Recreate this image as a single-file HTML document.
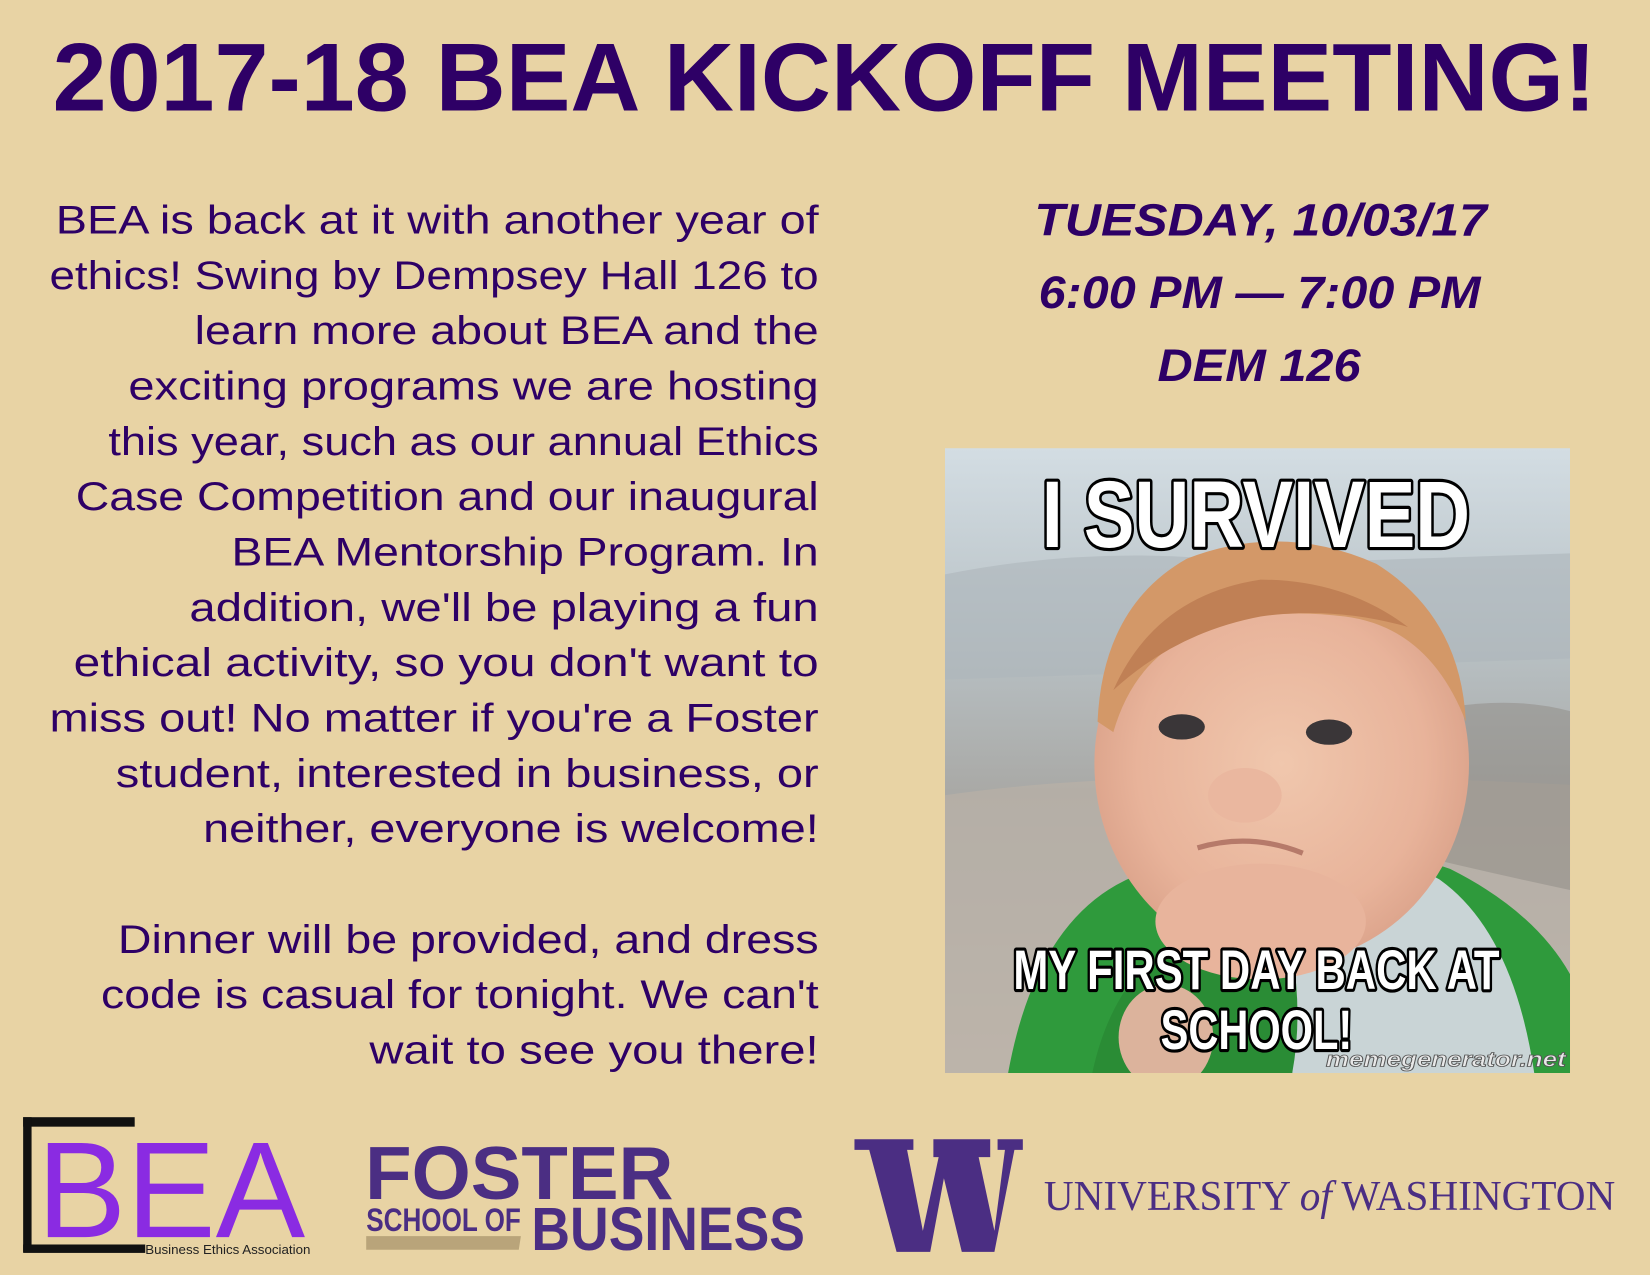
<!DOCTYPE html>
<html><head><meta charset="utf-8"><style>
html,body{margin:0;padding:0;background:#e8d3a4;}
svg{display:block}
</style></head><body>
<svg width="1650" height="1275" viewBox="0 0 1568 1212" preserveAspectRatio="none" xmlns="http://www.w3.org/2000/svg">
<defs>
<linearGradient id="bg" x1="0" y1="0" x2="0" y2="1">
<stop offset="0" stop-color="#d3dde3"/><stop offset="0.3" stop-color="#b9c2c6"/><stop offset="0.55" stop-color="#a9a9a6"/><stop offset="1" stop-color="#c4bcb2"/>
</linearGradient>
<radialGradient id="face" cx="0.5" cy="0.5" r="0.55">
<stop offset="0" stop-color="#f0c7ad"/><stop offset="0.7" stop-color="#e8b39a"/><stop offset="1" stop-color="#d9a088"/>
</radialGradient>
</defs>
<rect width="1568" height="1212" fill="#e8d3a4"/>
<text x="50" y="105" font-family="Liberation Sans, sans-serif" font-weight="bold" font-size="92" fill="#2e0066" textLength="1467" lengthAdjust="spacingAndGlyphs">2017-18 BEA KICKOFF MEETING!</text>

<g font-family="Liberation Sans, sans-serif" font-size="38" fill="#2e0066" text-anchor="end">
<text x="778" y="222" textLength="725" lengthAdjust="spacingAndGlyphs">BEA is back at it with another year of</text>
<text x="778" y="274.6" textLength="731" lengthAdjust="spacingAndGlyphs">ethics! Swing by Dempsey Hall 126 to</text>
<text x="778" y="327.2" textLength="593" lengthAdjust="spacingAndGlyphs">learn more about BEA and the</text>
<text x="778" y="379.8" textLength="656" lengthAdjust="spacingAndGlyphs">exciting programs we are hosting</text>
<text x="778" y="432.4" textLength="675" lengthAdjust="spacingAndGlyphs">this year, such as our annual Ethics</text>
<text x="778" y="485" textLength="706" lengthAdjust="spacingAndGlyphs">Case Competition and our inaugural</text>
<text x="778" y="537.6" textLength="558" lengthAdjust="spacingAndGlyphs">BEA Mentorship Program. In</text>
<text x="778" y="590.2" textLength="598" lengthAdjust="spacingAndGlyphs">addition, we'll be playing a fun</text>
<text x="778" y="642.8" textLength="708" lengthAdjust="spacingAndGlyphs">ethical activity, so you don't want to</text>
<text x="778" y="695.4" textLength="731" lengthAdjust="spacingAndGlyphs">miss out! No matter if you're a Foster</text>
<text x="778" y="748" textLength="668" lengthAdjust="spacingAndGlyphs">student, interested in business, or</text>
<text x="778" y="800.6" textLength="585" lengthAdjust="spacingAndGlyphs">neither, everyone is welcome!</text>
<text x="778" y="905.8" textLength="666" lengthAdjust="spacingAndGlyphs">Dinner will be provided, and dress</text>
<text x="778" y="958.4" textLength="682" lengthAdjust="spacingAndGlyphs">code is casual for tonight. We can't</text>
<text x="778" y="1011" textLength="427" lengthAdjust="spacingAndGlyphs">wait to see you there!</text>
</g>

<g font-family="Liberation Sans, sans-serif" font-weight="bold" font-style="italic" font-size="43" fill="#2e0066">
<text x="983" y="224" textLength="430" lengthAdjust="spacingAndGlyphs">TUESDAY, 10/03/17</text>
<text x="987" y="293" textLength="420" lengthAdjust="spacingAndGlyphs">6:00 PM — 7:00 PM</text>
<text x="1100" y="362" textLength="193" lengthAdjust="spacingAndGlyphs">DEM 126</text>
</g>

<svg x="898" y="426" width="594" height="594" viewBox="0 0 594 594">
<rect width="594" height="594" fill="url(#bg)"/>
<path d="M0 120 Q150 90 300 110 L594 100 L594 200 L0 220Z" fill="#aeb6ba" opacity="0.6"/>
<path d="M0 330 Q200 300 594 320 L594 594 L0 594Z" fill="#b9b1a7" opacity="0.7"/>
<path d="M420 260 Q520 230 594 250 L594 420 Q500 400 420 380Z" fill="#8e8a84" opacity="0.5"/>
<path d="M60 594 Q90 430 200 400 Q300 390 360 360 Q420 380 480 400 Q560 440 594 500 L594 594Z" fill="#2f9a3c"/>
<path d="M340 390 Q420 380 470 410 Q540 460 560 594 L330 594 Q320 470 340 390Z" fill="#c9d4d6"/>
<path d="M140 594 Q160 500 230 460 Q300 440 330 480 Q340 540 330 594Z" fill="#2a8c35"/>
<ellipse cx="320" cy="300" rx="178" ry="190" fill="url(#face)"/>
<ellipse cx="300" cy="450" rx="100" ry="55" fill="#e8b49c"/>
<path d="M145 260 Q150 150 230 105 Q320 70 410 110 Q490 160 495 260 Q460 170 380 160 Q300 150 240 175 Q180 200 160 270Z" fill="#d39868"/>
<path d="M160 230 Q200 140 300 125 Q380 125 440 170 Q370 150 300 160 Q220 175 160 230Z" fill="#c08055"/>
<ellipse cx="225" cy="265" rx="22" ry="12" fill="#3a3638"/>
<ellipse cx="365" cy="270" rx="22" ry="12" fill="#3a3638"/>
<ellipse cx="285" cy="330" rx="35" ry="26" fill="#eab79f"/>
<path d="M240 380 Q290 365 340 385" stroke="#b67a6a" stroke-width="5" fill="none"/>
<ellipse cx="210" cy="560" rx="45" ry="50" fill="#dcb39c"/>
</svg>

<g font-family="Liberation Sans, sans-serif" font-weight="bold" fill="#fff" stroke="#000" stroke-width="6" paint-order="stroke" stroke-linejoin="round">
<text x="990" y="520" font-size="90" textLength="407" lengthAdjust="spacingAndGlyphs">I SURVIVED</text>
<text x="963" y="940" font-size="53" textLength="462" lengthAdjust="spacingAndGlyphs">MY FIRST DAY BACK AT</text>
<text x="1103" y="997" font-size="53" textLength="182" lengthAdjust="spacingAndGlyphs">SCHOOL!</text>
</g>
<text x="1260" y="1014" font-family="Liberation Sans, sans-serif" font-weight="bold" font-style="italic" font-size="20" fill="#e8e8e8" stroke="#555" stroke-width="0.8" textLength="228" lengthAdjust="spacingAndGlyphs">memegenerator.net</text>

<rect x="22" y="1062" width="106" height="9" fill="#111"/>
<rect x="22" y="1062" width="8" height="128" fill="#111"/>
<rect x="22" y="1183" width="116" height="8" fill="#111"/>
<text x="35" y="1176" font-family="Liberation Sans, sans-serif" font-size="130" fill="#8a2be2" textLength="255" lengthAdjust="spacingAndGlyphs">BEA</text>
<text x="138" y="1192" font-family="Liberation Sans, sans-serif" font-size="12" fill="#222" textLength="157" lengthAdjust="spacingAndGlyphs">Business Ethics Association</text>

<g font-family="Liberation Sans, sans-serif" font-weight="bold" fill="#4b2e83">
<text x="347" y="1140" font-size="71" textLength="293" lengthAdjust="spacingAndGlyphs">FOSTER</text>
<text x="348" y="1170" font-size="31" textLength="147" lengthAdjust="spacingAndGlyphs">SCHOOL OF</text>
<text x="505" y="1188" font-size="58" textLength="260" lengthAdjust="spacingAndGlyphs">BUSINESS</text>
</g>
<polygon points="348,1175 495,1175 493,1188 348,1188" fill="#b9a47a"/>

<polygon points="812,1083 868,1083 868,1093 862,1093 877,1170 892,1100 887,1100 887,1083 941,1083 941,1100 935,1100 930,1100 945,1170 955,1093 948,1093 948,1083 972,1083 972,1093 964,1093 945,1190 914,1190 897,1120 884,1190 852,1190 826,1093 812,1093" fill="#4b2e83"/>
<text x="992" y="1150" font-family="Liberation Serif, serif" font-size="40" fill="#4b2e83" textLength="543" lengthAdjust="spacingAndGlyphs">UNIVERSITY <tspan font-style="italic">of</tspan> WASHINGTON</text>
</svg>
</body></html>
